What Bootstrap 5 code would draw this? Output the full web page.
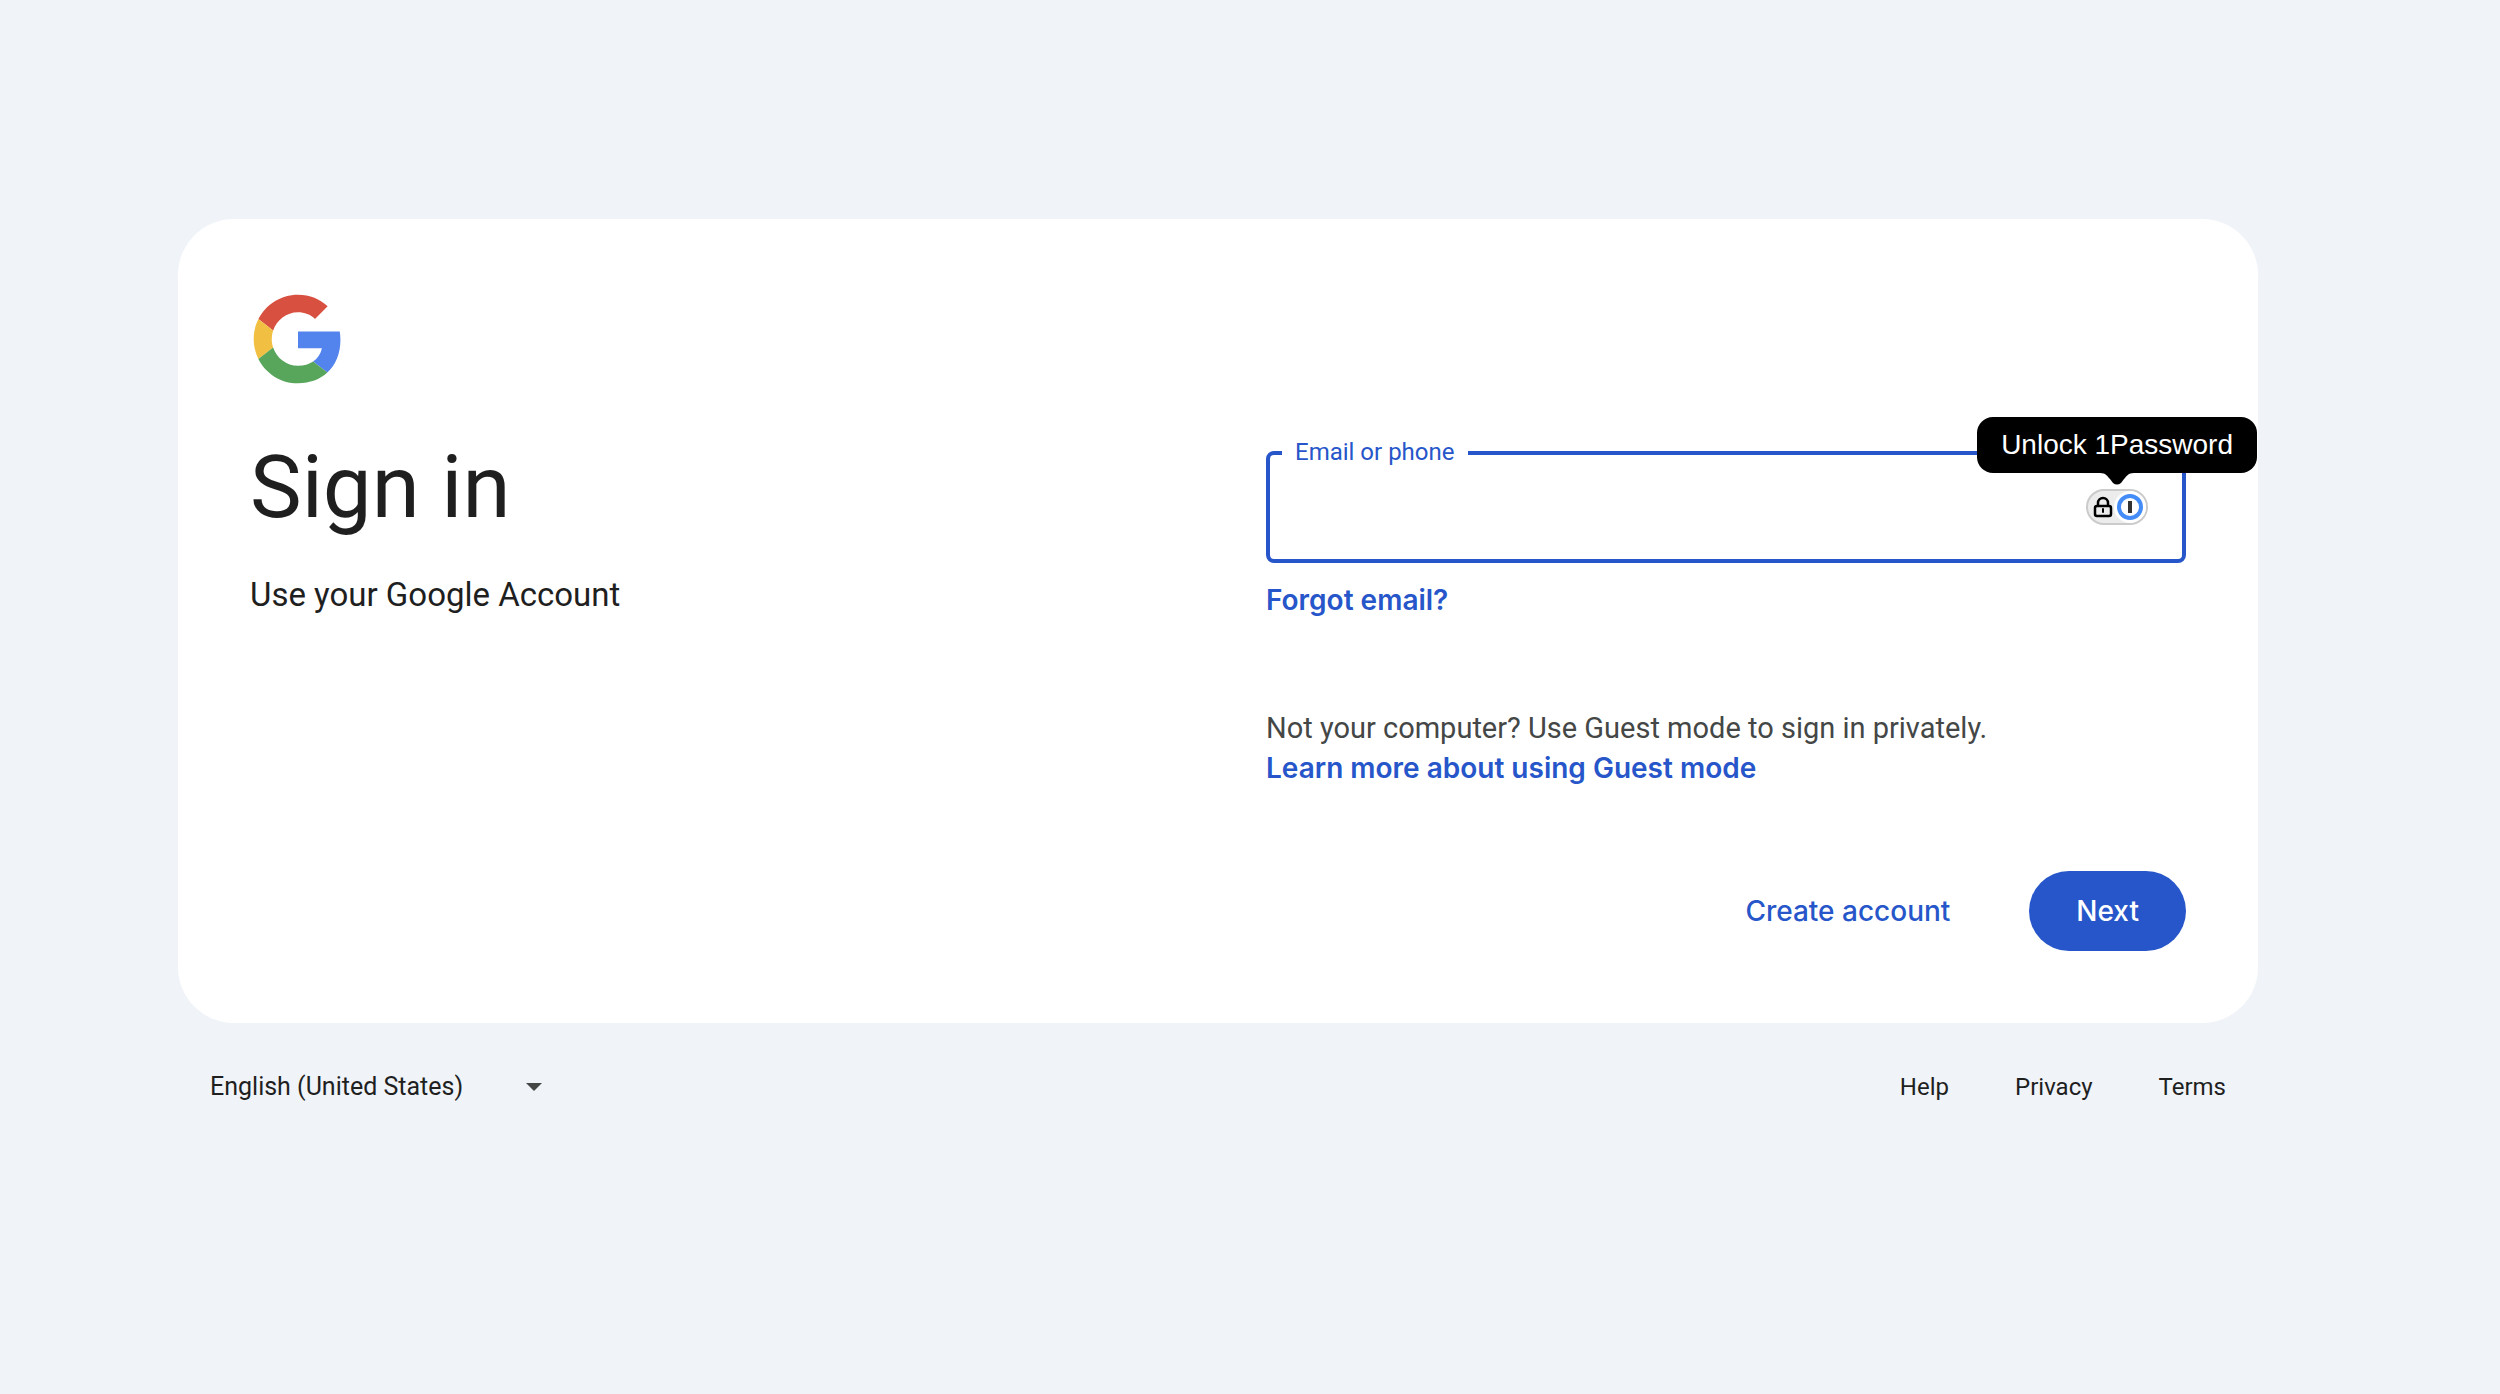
<!DOCTYPE html>
<html lang="en">
<head>
<meta charset="utf-8">
<meta name="viewport" content="width=device-width, initial-scale=1">
<title>Sign in - Google Accounts</title>
<link href="https://cdn.jsdelivr.net/npm/bootstrap@5.3.0/dist/css/bootstrap.min.css" rel="stylesheet">
<style>
  :root { --accent: #2656c9; --ink: #1f1f1f; }
  body {
    background: #f0f4f9;
    color: var(--ink);
    font-family: Roboto, "Liberation Sans", sans-serif;
    font-size: 29px;
    line-height: 40px;
  }
  a { color: var(--ink); text-decoration: none; }
  .page-shell { padding: 219px 242px 0 178px; }
  .signin-card {
    border: 0;
    border-radius: 56px;
    padding: 72px;
    background: #fff;
  }
  .signin-columns { --bs-gutter-x: 96px; }
  .brand-logo { width: 96px; height: 96px; }
  .signin-title {
    font-size: 87px;
    line-height: 112px;
    font-weight: 400;
    margin: 44px 0 28px;
  }
  .signin-subtitle { font-size: 33px; line-height: 48px; margin: 0; }
  .form-column { padding-top: 160px; }
  .email-field .form-control {
    height: 112px;
    border: 4px solid var(--accent);
    border-radius: 8px;
    padding: 0 120px 0 24px;
    font-size: 33px;
    box-shadow: none;
  }
  .email-field label {
    top: -15px;
    left: 16px;
    padding: 0 13px;
    background: #fff;
    color: var(--accent);
    font-size: 24px;
    line-height: 32px;
  }
  .strong-link {
    font-family: Inter, sans-serif;
    font-size: 28px;
    font-weight: 600;
    color: var(--accent);
  }
  .forgot-row { margin-top: 17px; }
  .guest-text { margin: 88px 0 83px; color: #444746; }
  .form-actions { gap: 32px; }
  .form-actions .btn {
    height: 80px;
    border: 0;
    border-radius: 40px;
    padding: 0 47px;
    font-family: Inter, sans-serif;
    font-size: 28px;
    font-weight: 500;
    line-height: 40px;
  }
  .btn-create { color: var(--accent); }
  .btn-next { background: var(--accent); color: #fff; }
  .btn-next:hover { background: #1d49b3; color: #fff; }

  .pm-pill {
    top: 38px;
    right: 38px;
    width: 62px;
    height: 36px;
    padding: 0;
    border: 0;
    background: none;
    line-height: 0;
  }
  .pm-tip {
    top: -34px;
    right: -71px;
    padding: 8px 24px;
    border-radius: 16px;
    background: #000;
    color: #fff;
    font-family: "Liberation Sans", sans-serif;
    font-size: 28px;
    line-height: 40px;
    white-space: nowrap;
  }
  .pm-tip svg { top: 100%; right: 123px; margin-top: -1px; }

  .page-footer { padding: 44px 32px 0; font-size: 24px; }
  .footer-links { gap: 66px; }
  .language-picker .form-select {
    width: 350px;
    border: 0;
    background: none;
    padding: 0 50px 0 0;
    color: var(--ink);
    font-size: 25px;
    line-height: 40px;
  }
  .language-picker svg { top: 16px; right: 18px; pointer-events: none; }
</style>
</head>
<body>
<div class="page-shell">
  <main class="card signin-card">
    <div class="row signin-columns">
      <div class="col-6">
        <svg class="brand-logo d-block" viewBox="-2 -2 52 52" role="img" aria-label="Google">
          <path fill="#d85140" d="M24 9.5c3.54 0 6.71 1.22 9.21 3.6l6.85-6.85C35.9 2.38 30.47 0 24 0 14.62 0 6.51 5.38 2.56 13.22l7.98 6.19C12.43 13.72 17.74 9.5 24 9.5z"/>
          <path fill="#5383ec" d="M46.98 24.55c0-1.57-.15-3.09-.38-4.55H24v9.02h12.94c-.58 2.96-2.26 5.48-4.78 7.18l7.73 6c4.51-4.18 7.09-10.36 7.09-17.65z"/>
          <path fill="#f1bf42" d="M10.53 28.59c-.48-1.45-.76-2.99-.76-4.59s.27-3.14.76-4.59l-7.98-6.19C.92 16.46 0 20.12 0 24c0 3.88.92 7.54 2.56 10.78l7.97-6.19z"/>
          <path fill="#58a55c" d="M24 48c6.48 0 11.93-2.13 15.89-5.81l-7.73-6c-2.15 1.45-4.92 2.3-8.16 2.3-6.26 0-11.57-4.22-13.47-9.91l-7.98 6.19C6.51 42.62 14.62 48 24 48z"/>
        </svg>
        <h1 class="signin-title">Sign in</h1>
        <p class="signin-subtitle">Use your Google Account</p>
      </div>
      <div class="col-6">
        <form class="form-column" onsubmit="return false">
          <div class="email-field position-relative">
            <input class="form-control" type="email" id="identifier" autocomplete="username">
            <label class="position-absolute" for="identifier">Email or phone</label>
            <button class="pm-pill position-absolute" type="button" aria-describedby="pm-tip" aria-label="1Password">
              <svg width="62" height="36" viewBox="0 0 62 36">
                <rect x="1" y="1" width="60" height="34" rx="17" fill="#ececec" stroke="#cbcbcb" stroke-width="2"/>
                <circle cx="44" cy="18" r="16" fill="#fff"/>
                <circle cx="44" cy="18" r="11" fill="#fff" stroke="#448cf7" stroke-width="4"/>
                <rect x="42" y="12" width="4" height="12" fill="#333"/>
                <rect x="9" y="17" width="16" height="10" rx="2" fill="none" stroke="#000" stroke-width="2.5"/>
                <path d="M12 17v-3a5 5 0 0 1 10 0v3" fill="none" stroke="#000" stroke-width="2.5"/>
                <rect x="16" y="19" width="2" height="5" rx="1" fill="#000"/>
              </svg>
            </button>
            <div class="pm-tip position-absolute" id="pm-tip" role="tooltip">Unlock 1Password
              <svg class="position-absolute" width="34" height="13" viewBox="0 0 34 13" aria-hidden="true">
                <path d="M0 0h34v1c-6 0-7 3-10 6l-3 4q-4 3-8 0l-3-4C7 4 6 1 0 1z" fill="#000"/>
              </svg>
            </div>
          </div>
          <div class="forgot-row"><a class="strong-link" href="#">Forgot email?</a></div>
          <p class="guest-text">Not your computer? Use Guest mode to sign in privately.<br>
            <a class="strong-link" href="#">Learn more about using Guest mode</a></p>
          <div class="form-actions d-flex justify-content-end">
            <button class="btn btn-create" type="button">Create account</button>
            <button class="btn btn-next" type="submit">Next</button>
          </div>
        </form>
      </div>
    </div>
  </main>
  <footer class="page-footer d-flex justify-content-between align-items-center">
    <div class="language-picker position-relative">
      <select class="form-select" aria-label="Language">
        <option selected>English (United States)</option>
      </select>
      <svg class="position-absolute" width="16" height="8" viewBox="0 0 16 8" aria-hidden="true"><path d="M0 0h16L8 8z" fill="#444746"/></svg>
    </div>
    <nav class="footer-links d-flex" aria-label="Footer">
      <a href="#">Help</a>
      <a href="#">Privacy</a>
      <a href="#">Terms</a>
    </nav>
  </footer>
</div>
<script src="https://cdn.jsdelivr.net/npm/bootstrap@5.3.0/dist/js/bootstrap.bundle.min.js"></script>
</body>
</html>
